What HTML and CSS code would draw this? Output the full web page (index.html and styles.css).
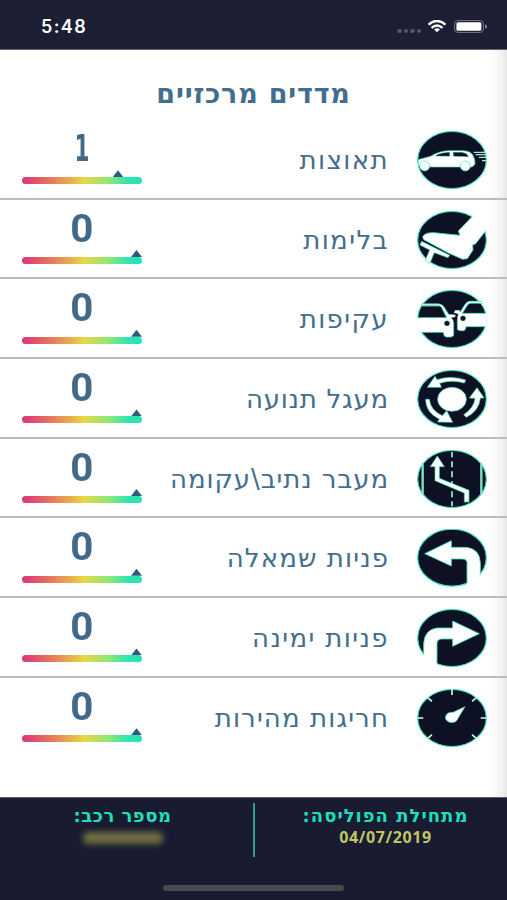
FILE: index.html
```html
<!DOCTYPE html>
<html lang="he" dir="rtl">
<head>
<meta charset="utf-8">
<title>מדדים מרכזיים</title>
<link rel="stylesheet" href="styles.css">
</head>
<body>
<div class="phone">
  <header class="status" dir="ltr">
    <span class="time">5:48</span>
    <div class="signals">
      <span class="dots"><i></i><i></i><i></i><i></i></span>
      <svg class="wifi" viewBox="0 0 20 14"><g fill="none" stroke="#fff" stroke-width="2.5"><path d="M.9 5.1Q10-3.1 19.1 5.1"/><path d="M4.1 8.5Q10 3.3 15.9 8.5"/></g><path d="M6.9 10.3Q10 7.7 13.1 10.3L10 13.3Z" fill="#fff"/></svg>
      <svg class="battery" viewBox="0 0 34 13"><rect x=".6" y=".6" width="28.8" height="11.8" rx="3.2" fill="none" stroke="#77788a" stroke-width="1"/><rect x="2.4" y="2.2" width="25" height="8.6" rx="1.6" fill="#fff"/><path d="M31 4.2Q33.2 4.8 33.2 6.5T31 8.8Z" fill="#77788a"/></svg>
    </div>
  </header>
  <main class="content">
    <h1 class="title">מדדים מרכזיים</h1>
    <ul class="list">
      <li class="row">
        <svg class="icon" viewBox="50 33 210 174"><ellipse class="disc" cx="155" cy="120" rx="103" ry="85.5"/>
          <path class="shape" d="M53 119L91 109Q116 92 150 92H188Q213 93 219 108Q225 121 224 133L215 141H92L55 137Z"/>
          <path class="cut" d="M104 108Q122 97 148 97V109ZM158 97H184Q199 98 205 110L160 109Z"/>
          <circle class="shape" cx="73" cy="138" r="15"/><circle class="shape" cx="195" cy="138" r="15"/>
          <path class="speed" d="M220 97H260M226 104H260M236 112H260M245 122H260"/></svg>
        <span class="label l1">תאוצות</span>
        <div class="score"><span class="num num-one">1</span><div class="meter"><i class="mark mark-low"></i></div></div>
      </li>
      <li class="row">
        <svg class="icon" viewBox="50 272 210 174"><ellipse class="disc" cx="155" cy="359" rx="103" ry="85.5"/>
          <path class="white" d="M215 289L174 332L179 345L100 337Q74 336 67 349L70 358L144 398L187 417L201 415L218 389L217 374L225 371L258 329L262 300L238 270Z"/>
          <path class="edge" d="M215 289L174 332L179 345L100 337Q74 336 67 349L70 358L144 398L187 417L201 415L218 389L217 374L225 371L257 331"/>
          <path class="shape" d="M64 363L148 405L143 412L102 397L88 430L75 420L88 389L59 374Z"/></svg>
        <span class="label l2">בלימות</span>
        <div class="score"><span class="num">0</span><div class="meter"><i class="mark"></i></div></div>
      </li>
      <li class="row">
        <svg class="icon" viewBox="50 31 210 174"><ellipse class="disc" cx="155" cy="118" rx="103" ry="85.5"/>
          <path class="white" d="M48 114H139L123 82Q119 78 112 78H65V72H115Q126 73 131 82L145 104L165 106V112L152 114Q160 119 160 129V166Q158 172 151 172H137Q130 171 129 158H62L48 144Z"/>
          <path class="white" d="M262 101H186L202 75Q206 70 214 70H246V64H210Q200 65 195 73L179 98L178 92H164L161 99L174 103Q171 109 171 121V148Q173 153 180 153H191Q197 151 197 141H257Z"/>
          <path class="edge" d="M63 73H115Q126 73 131 82L145 104L165 106M64 79H112Q119 78 123 82L139 114H52M64 158H129Q130 171 137 172H151Q158 172 160 166V129M246 65H210Q200 65 195 73L179 98M247 71H214Q206 70 202 75L186 101H258M256 141H197Q197 151 191 153H180Q173 153 171 148V121"/>
          <circle class="cut" cx="140" cy="131" r="8"/><circle class="cut" cx="188" cy="116" r="8"/></svg>
        <span class="label l3">עקיפות</span>
        <div class="score"><span class="num">0</span><div class="meter"><i class="mark"></i></div></div>
      </li>
      <li class="row">
        <svg class="icon" viewBox="50 270 210 174"><ellipse class="disc" cx="155" cy="357" rx="103" ry="85.5"/>
          <ellipse class="shape" cx="155" cy="358" rx="43" ry="36"/>
          <path class="shape" d="M81 322L104 289L110 299Q153 285 196 300L192 309Q154 298 118 310L123 322Z"/>
          <path class="shape" d="M230 323L251 353L240 355Q236 393 198 412L190 404Q221 385 224 355L207 354Z"/>
          <path class="shape" d="M157 427L112 426L117 417Q76 398 76 358H87Q90 391 126 407L139 392Z"/></svg>
        <span class="label l4">מעגל תנועה</span>
        <div class="score"><span class="num">0</span><div class="meter"><i class="mark"></i></div></div>
      </li>
      <li class="row">
        <svg class="icon" viewBox="50 30 210 174"><ellipse class="disc" cx="155" cy="117" rx="103" ry="85.5"/>
          <path class="lane" d="M67 70V164M243 70V164"/><path class="dash" d="M155 36V52M155 64V82M155 94V112M155 124V142M155 154V172M155 184V199"/>
          <path class="shape" d="M111 48L132 80H117V115L206 151V186H192V159L104 122V80H90Z"/></svg>
        <span class="label l5">מעבר נתיב\עקומה</span>
        <div class="score"><span class="num">0</span><div class="meter"><i class="mark"></i></div></div>
      </li>
      <li class="row">
        <svg class="icon" viewBox="50 269 210 174"><ellipse class="disc" cx="155" cy="355" rx="103" ry="85.5"/>
          <path class="white" d="M73 343L153 304V324H197Q238 328 240 370V404L225 440H200V371Q200 360 187 359H153V380Z"/>
          <path class="edge" d="M240 405V370Q238 328 197 324H153V304L73 343L153 380V359H187Q200 360 200 371V431"/></svg>
        <span class="label l6">פניות שמאלה</span>
        <div class="score"><span class="num">0</span><div class="meter"><i class="mark"></i></div></div>
      </li>
      <li class="row">
        <svg class="icon" viewBox="50 28 210 174"><ellipse class="disc" cx="155" cy="115" rx="103" ry="85.5"/>
          <path class="white" d="M237 102L157 64V85H110Q73 90 70 131V164L83 202H110V131Q110 119 122 118H157V140Z"/>
          <path class="edge" d="M70 165V131Q73 90 110 85H157V64L237 102L157 140V118H122Q110 119 110 131V192"/></svg>
        <span class="label l7">פניות ימינה</span>
        <div class="score"><span class="num">0</span><div class="meter"><i class="mark"></i></div></div>
      </li>
      <li class="row">
        <svg class="icon" viewBox="50 267 210 174"><ellipse class="disc" cx="155" cy="354" rx="103" ry="85.5"/>
          <path class="tick" d="M155 268V285M51 354H69M241 354H259M82 293L95 304M228 293L215 304M82 415L95 404M228 415L215 404"/>
          <path class="shape" d="M194 320L173 355A19 15.5 0 1 1 158 337Z"/></svg>
        <span class="label l8">חריגות מהירות</span>
        <div class="score"><span class="num">0</span><div class="meter"><i class="mark"></i></div></div>
      </li>
    </ul>
  </main>
  <footer class="footer">
    <div class="info">
      <div class="cell cell-start"><span class="cap cap-start">מתחילת הפוליסה:</span><span class="val">04/07/2019</span></div>
      <i class="divider"></i>
      <div class="cell cell-end"><span class="cap">מספר רכב:</span><i class="redacted"></i></div>
    </div>
    <i class="home"></i>
  </footer>
</div>
</body>
</html>
```
FILE: styles.css
```css
* { box-sizing: border-box; }
body { margin: 0; background: #fff; font-family: "DejaVu Sans", sans-serif; }
.phone { width: 507px; height: 900px; display: flex; flex-direction: column; overflow: hidden; }
.status { height: 50px; flex: none; background: #1c1e34; border-bottom: 1px solid #686974; display: flex; justify-content: space-between; align-items: flex-start; padding: 0 19px 0 41px; }
.time { color: #fff; font: 600 18px/24px Inter, sans-serif; letter-spacing: 1.4px; margin-top: 15px; }
.signals { display: flex; align-items: center; margin-top: 20px; height: 13px; }
.dots { display: flex; gap: 2px; margin: 8px 6px 0 0; }
.dots i { width: 4.5px; height: 4px; border-radius: 50%; background: #55566a; }
.wifi { width: 20px; height: 13px; margin-right: 7px; }
.battery { width: 34px; height: 13px; }
.content { height: 747px; flex: none; background: linear-gradient(to left, #e6e6e6 0, #f3f3f3 6px, #fff 17px); }
.title { margin: 0; height: 70px; padding: 22px 0 0; text-align: center; color: #446e8e; font-size: 27px; line-height: 44px; font-weight: 700; letter-spacing: .8px; }
.list { list-style: none; margin: 0; padding: 0; }
.row { height: 79.7px; border-bottom: 2px solid #bcbcbc; display: flex; align-items: center; padding: 2px 20px 0 22px; }
.row:last-child { border-color: transparent; }
.icon { width: 70px; height: 58px; flex: none; }
.label { flex: 1; margin-right: 28px; color: #446e8e; font-size: 26px; line-height: 40px; white-space: nowrap; letter-spacing: 1.1px; }
.l1, .l2, .l3 { letter-spacing: 1.4px; }
.l4 { letter-spacing: .75px; }
.l5 { letter-spacing: .9px; }
.l7 { letter-spacing: 1.4px; }
.score { width: 120px; height: 77px; flex: none; display: flex; flex-direction: column; align-items: center; }
.num { color: #40698a; font: 700 38px/40px Roboto, sans-serif; height: 55px; padding-top: 7.5px; transform: scaleX(1.06); }
.num-one { font: 700 37px/40px "DejaVu Sans", sans-serif; transform: scaleX(.58); padding-top: 8px; }
.meter { position: relative; width: 120px; height: 7px; border-radius: 4px; background: linear-gradient(to right, #dc3475, #e47460 23%, #e8d743 52%, #90e678 72%, #30e5b0 88%, #23e2bd); margin-top: 1px; }
.mark { position: absolute; top: -7px; right: 0; width: 11px; height: 7px; background: #315b79; clip-path: polygon(50% 0, 100% 100%, 0 100%); }
.mark-low { right: 18.5px; }
.disc { fill: #0e1024; stroke: #3fe0bd; stroke-width: 3.5; }
.shape { fill: #fff; stroke: #3fe0bd; stroke-width: 2; }
.white { fill: #fff; }
.edge { fill: none; stroke: #3fe0bd; stroke-width: 2.5; }
.cut { fill: #0e1024; stroke: #3fe0bd; stroke-width: 1; }
.speed { fill: none; stroke: #9beedb; stroke-width: 3.5; }
.lane { fill: none; stroke: #7ee3cb; stroke-width: 7; }
.dash { fill: none; stroke: #a5ecda; stroke-width: 5; }
.tick { fill: none; stroke: #c8fff0; stroke-width: 5; }
.footer { flex: 1; background: #191b30; border-top: 1px solid #5d5e6c; display: flex; flex-direction: column; align-items: center; }
.info { width: 507px; display: flex; height: 87px; }
.cell { display: flex; flex-direction: column; align-items: center; }
.cell-start { width: 252px; padding: 6px 0 0 9px; }
.cell-end { flex: 1; padding: 6px 8px 0 0; }
.cap { color: #1fdebd; font-size: 18px; font-weight: 700; line-height: 24px; white-space: nowrap; letter-spacing: .5px; }
.cap-start { letter-spacing: 1px; }
.val { color: #c0c562; font: 700 16px/18px "Open Sans", sans-serif; letter-spacing: .6px; }
.divider { width: 2px; height: 54px; margin-top: 5px; background: #2c9e91; }
.redacted { width: 80px; height: 12px; margin-top: 4px; border-radius: 5px; background: #706f43; filter: blur(3px); }
.home { width: 181px; height: 6px; border-radius: 3px; background: #484a4e; }
```
